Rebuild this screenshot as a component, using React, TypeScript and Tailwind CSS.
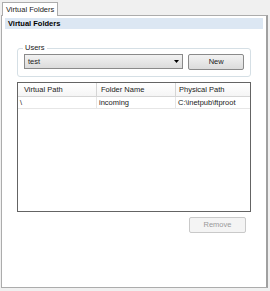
const font = "font-['Liberation_Sans','Arial',sans-serif]";

function Button({ label, disabled }: { label: string; disabled?: boolean }) {
  return (
    <div
      className={
        'w-[57px] h-[16px] rounded-[2px] border flex items-center justify-center text-[7.5px] leading-none ' +
        (disabled
          ? 'border-[#c9c9c9] bg-[#f4f4f4] text-[#9a9a9a]'
          : 'border-[#8a8a8a] bg-gradient-to-b from-[#f2f2f2] to-[#dcdcdc] text-[#1a1a1a]')
      }
    >
      {label}
    </div>
  );
}

export default function App() {
  return (
    <div className={`w-[270px] h-[291px] bg-[#f0f0f0] pt-[2px] pl-[1px] pr-[2px] pb-[3px] flex flex-col ${font}`}>
      <div className="flex">
        <div className="ml-[1px] h-[14px] px-[3px] whitespace-nowrap border border-b-0 border-[#acacac] bg-white text-[7.5px] leading-[13px] text-[#1a1a1a] relative z-10 -mb-px">
          Virtual Folders
        </div>
      </div>
      <div className="flex-1 bg-white border border-[#acacac] border-r-[2px] border-r-[#a0a0a0] px-[3px] pt-[2px]">
        <div className="h-[11px] bg-[#dce7f3] font-bold text-[7.5px] leading-[11px] pl-[3px] text-black whitespace-nowrap">
          Virtual Folders
        </div>

        <div className="mx-[12px] mt-[19px] relative border border-[#d5dfe5] rounded-[3px] h-[29px] px-[6px] pt-[5px] flex gap-[5px]">
          <span className="absolute -top-[6px] left-[5px] bg-white px-[2px] text-[7.5px] leading-[10px] text-[#1a1a1a]">Users</span>
          <div className="w-[163px] h-[15px] border border-[#8a8a8a] bg-gradient-to-b from-[#f2f2f2] to-[#dcdcdc] flex items-center pl-[3px] text-[7.5px] text-[#1a1a1a]">
            <span className="flex-1">test</span>
            <span className="w-[12px] flex justify-center">
              <svg width="5" height="3" viewBox="0 0 5 3"><path d="M0 0h5L2.5 3z" fill="#000" /></svg>
            </span>
          </div>
          <Button label="New" />
        </div>

        <div className="mx-[12px] mt-[5px] h-[130px] border border-[#646464] text-[7.5px] text-[#1a1a1a]">
          <div className="flex h-[14px] border-b border-[#d5d5d5] bg-gradient-to-b from-white to-[#f5f5f5]">
            <div className="w-[79px] pl-[6px] border-r border-[#d5d5d5] leading-[14px]">Virtual Path</div>
            <div className="w-[79px] pl-[4px] border-r border-[#d5d5d5] leading-[14px]">Folder Name</div>
            <div className="flex-1 pl-[3px] leading-[14px]">Physical Path</div>
          </div>
          <div className="flex h-[12px] border-b border-[#e6e6e6]">
            <div className="w-[79px] pl-[2px] border-r border-[#e6e6e6] leading-[12px]">\</div>
            <div className="w-[79px] pl-[2px] border-r border-[#e6e6e6] leading-[12px]">incoming</div>
            <div className="flex-1 pl-[2px] leading-[12px]">C:\inetpub\ftproot</div>
          </div>
        </div>

        <div className="flex justify-end mr-[17px] mt-[5px]">
          <Button label="Remove" disabled />
        </div>
      </div>
    </div>
  );
}
